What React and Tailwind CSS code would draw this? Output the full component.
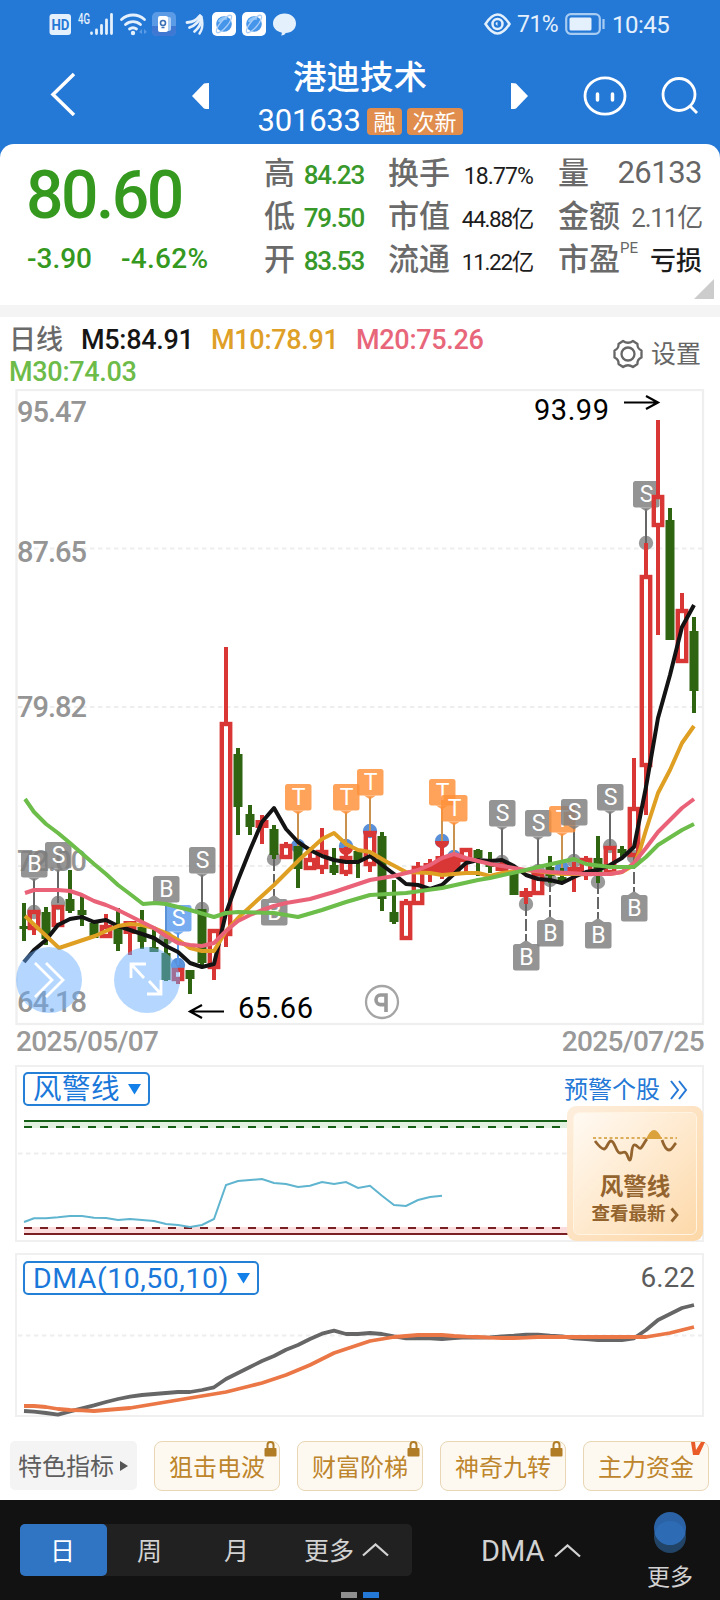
// [type, high, top, bottom, low]  u = hollow red, f = filled red, d = green
const candles = [
  ['d', 903, 926, 929, 941],
  ['u', 910, 910, 930, 935],
  ['d', 907, 912, 939, 945],
  ['u', 905, 905, 927, 927],
  ['d', 870, 899, 911, 913],
  ['d', 896, 910, 915, 926],
  ['d', 921, 923, 938, 938],
  ['u', 914, 925, 938, 938],
  ['d', 908, 926, 944, 951],
  ['f', 921, 921, 934, 955],
  ['d', 910, 927, 942, 949],
  ['d', 927, 947, 952, 952],
  ['d', 939, 953, 980, 981],
  ['u', 968, 968, 981, 984],
  ['d', 970, 970, 979, 994],
  ['d', 909, 909, 963, 967],
  ['u', 929, 929, 969, 980],
  ['u', 647, 722, 936, 947],
  ['d', 748, 754, 807, 835],
  ['d', 805, 814, 827, 835],
  ['f', 815, 820, 828, 844],
  ['d', 825, 829, 855, 859],
  ['u', 842, 844, 859, 859],
  ['d', 846, 846, 869, 888],
  ['u', 850, 858, 870, 870],
  ['u', 828, 850, 869, 874],
  ['d', 848, 865, 873, 875],
  ['u', 847, 856, 874, 876],
  ['d', 849, 851, 861, 878],
  ['u', 831, 831, 866, 872],
  ['d', 832, 836, 899, 911],
  ['d', 880, 912, 922, 924],
  ['u', 899, 901, 940, 940],
  ['u', 862, 866, 905, 905],
  ['f', 859, 863, 873, 882],
  ['f', 841, 856, 873, 879],
  ['f', 855, 855, 873, 873],
  ['u', 848, 848, 862, 873],
  ['d', 849, 850, 858, 876],
  ['d', 852, 860, 867, 873],
  ['f', 860, 863, 871, 871],
  ['d', 872, 872, 895, 895],
  ['f', 888, 891, 897, 904],
  ['u', 872, 872, 895, 895],
  ['d', 856, 867, 876, 883],
  ['d', 868, 877, 881, 883],
  ['f', 862, 867, 875, 892],
  ['u', 856, 858, 876, 880],
  ['d', 836, 858, 872, 883],
  ['u', 846, 846, 874, 874],
  ['d', 846, 849, 853, 857],
  ['u', 758, 807, 857, 857],
  ['u', 543, 575, 767, 815],
  ['u', 420, 495, 527, 635],
  ['d', 508, 520, 640, 640],
  ['u', 593, 609, 663, 663],
  ['d', 617, 631, 691, 713],
];

const ma5 = '24,962 34,950 46,940 58,925 70,919 82,917 94,922 106,920 118,926 130,930 142,934 154,938 166,946 178,952 190,963 202,967 214,964 226,913 238,880 250,850 262,822 274,808 286,829 298,842 310,850 322,856 334,860 346,862 358,862 370,856 382,865 394,874 406,884 418,885 430,889 442,885 454,874 466,863 478,860 490,861 502,860 514,866 526,875 538,879 550,880 562,883 574,877 586,872 598,870 610,865 622,858 634,847 646,787 658,718 670,675 682,627 694,605';
const ma10 = '25,916 59,948 95,936 106,931 118,926 130,924 142,925 154,928 166,933 178,940 190,948 202,951 214,951 226,931 238,918 274,885 300,859 322,839 334,833 346,844 358,850 370,852 387,862 406,872 430,873 442,875 466,873 478,873 490,876 502,873 526,870 562,874 610,874 622,872 634,865 640,850 646,830 658,793 670,770 682,743 694,726';
const ma20 = '25,893 34,890 58,890 70,891 82,895 94,901 106,905 118,910 130,916 142,922 154,928 166,936 178,943 190,945 202,946 214,943 226,931 238,921 250,915 262,910 274,906 286,903 310,899 334,892 370,880 394,876 418,870 430,865 442,858 454,854 466,858 478,861 490,864 502,866 526,870 550,872 586,874 610,874 622,872 634,863 646,848 658,832 682,808 694,799';
const ma30 = '25,799 34,812 46,824 58,833 70,843 94,864 106,874 118,885 130,894 143,904 155,903 166,904 190,910 214,917 226,913 238,912 274,913 298,917 322,910 346,902 370,895 406,893 442,888 478,880 490,878 526,870 538,867 574,859 586,864 610,867 634,867 646,857 658,845 682,830 694,824';

// [letter, x, box top, dot y, color]
const markers = [
  ['B', 34, 851, 912, '#7d7d7d'],
  ['S', 58, 842, 903, '#7d7d7d'],
  ['B', 166, 876, 938, '#7d7d7d'],
  ['S', 178, 905, 965, '#5b9bee'],
  ['S', 202, 847, 909, '#7d7d7d'],
  ['B', 274, 899, 859, '#7d7d7d'],
  ['T', 298, 784, 846, '#ff9038'],
  ['T', 346, 784, 846, '#ff9038'],
  ['T', 370, 769, 831, '#ff9038'],
  ['T', 442, 779, 841, '#ff9038'],
  ['T', 454, 795, 857, '#ff9038'],
  ['S', 502, 800, 862, '#7d7d7d'],
  ['B', 526, 944, 904, '#7d7d7d'],
  ['S', 538, 810, 871, '#7d7d7d'],
  ['B', 550, 920, 880, '#7d7d7d'],
  ['T', 562, 806, 868, '#ff9038'],
  ['S', 574, 799, 861, '#7d7d7d'],
  ['B', 598, 922, 882, '#7d7d7d'],
  ['S', 610, 784, 846, '#7d7d7d'],
  ['B', 634, 895, 857, '#7d7d7d'],
  ['S', 646, 481, 543, '#7d7d7d'],
];

const warn = [1222, 1218.3, 1218.3, 1217.3, 1216, 1216, 1217.7, 1218, 1220, 1219, 1220, 1221, 1224, 1225, 1227, 1225, 1219, 1185, 1181, 1180, 1179, 1183, 1184, 1187, 1185.7, 1182, 1184, 1182, 1188, 1185.7, 1195.7, 1205, 1206, 1200, 1197, 1195.7];
const dif = [171, 171.7, 173, 174.7, 171.3, 168.3, 165.3, 162, 159, 156.7, 155, 154, 153, 152, 152, 150, 147.3, 139, 133, 127, 121, 116, 109.7, 105, 99, 93.7, 90.7, 94, 94, 93, 94, 96.3, 98.3, 98.3, 98.3, 99, 98, 97.3, 97.7, 97.3, 96.3, 95.7, 94.7, 94.7, 95.7, 96.3, 98.3, 99, 100, 100, 100, 98.3, 90, 80, 74, 68, 65];
const ama = [166, 166, 167, 169, 170, 170.3, 171, 170, 169, 168, 166, 164, 162, 160, 158, 156, 154, 152, 149, 146, 143, 139, 135, 130, 125, 119, 113, 109, 105, 101, 99, 97, 96, 95, 95, 95, 96, 96.7, 97, 97.7, 98, 98, 97.7, 97, 97, 97, 97, 97, 97, 97, 97, 97, 97, 95, 93, 90, 87];

const xAt = (i) => (i === 0 ? 24 : 22 + i * 12);
const toPoints = (values) => values.map((v, i) => `${xAt(i)},${v}`).join(' ');

function Candle({ x, data }) {
  const [type, high, top, bottom, low] = data;
  if (type === 'd') {
    return (
      <g fill="#2f6410">
        <rect x={x - 2} y={high} width="4" height={low - high} />
        <rect x={x - 4.5} y={top} width="9" height={bottom - top} />
      </g>
    );
  }
  return (
    <g fill="#d93636">
      {top > high && <rect x={x - 2} y={high} width="4" height={top - high} />}
      {low > bottom && <rect x={x - 2} y={bottom} width="4" height={low - bottom} />}
      {type === 'f' ? (
        <rect x={x - 6.5} y={top} width="13" height={bottom - top} />
      ) : (
        <rect x={x - 4.2} y={top + 2} width="8.4" height={bottom - top - 4} fill="none" stroke="#d93636" strokeWidth="4.4" />
      )}
    </g>
  );
}

function MarkerStem({ data }) {
  const [letter, x, top, dot, color] = data;
  const below = top > dot;
  const dotColor = letter === 'T' || color === '#5b9bee' ? '#5a90d8' : '#999999';
  const stem = letter === 'T' ? '#c9924e' : color === '#5b9bee' ? '#5b9bee' : '#666666';
  return (
    <g>
      <circle cx={x} cy={dot} r="7.2" fill={dotColor} />
      <line
        x1={x}
        x2={x}
        y1={below ? dot : top + 28}
        y2={below ? top - 3 : dot}
        stroke={stem}
        strokeWidth="2"
        strokeDasharray={below ? '12 3' : undefined}
      />
    </g>
  );
}

function MarkerBox({ data }) {
  const [letter, x, top, dot, color] = data;
  const below = top > dot;
  return (
    <g>
      <g fill={color} opacity="0.82">
        <rect x={x - 13} y={top} width="26.5" height="26.5" rx="2.5" />
        <path d={below ? `M${x - 6} ${top}l6-4 6 4z` : `M${x - 6} ${top + 26.5}l6 4 6-4z`} />
      </g>
      <text x={x + 0.5} y={top + 21} textAnchor="middle" fontSize="23" fill="#fff">{letter}</text>
    </g>
  );
}

function StatusBar() {
  return (
    <div className="flex h-12 items-center justify-between pl-[49px] pr-[49px] text-white">
      <svg width="250" height="26" viewBox="49 11 250 26">
        <rect x="49.5" y="14" width="21.5" height="21" rx="3" fill="#e4f0fc" />
        <text x="51.5" y="30" fontSize="15" fontWeight="700" fill="#2478d6" textLength="18" lengthAdjust="spacingAndGlyphs">HD</text>
        <text x="78" y="23.5" fontSize="14" fontWeight="500" fill="#e4f0fc" textLength="12" lengthAdjust="spacingAndGlyphs">4G</text>
        <path d="M91.500 33v.5M96.500 30v3.500M101.500 25.500v8M106.500 20v13.500M111.500 14.500v19" stroke="#e4f0fc" strokeWidth="2.800" strokeLinecap="round" />
        <g fill="none" stroke="#e4f0fc" strokeWidth="2.800" strokeLinecap="round">
          <path d="M121.500 19.500a17 17 0 0 1 23 0M125.500 24.500a11 11 0 0 1 15 0M129.500 29a6 6 0 0 1 7 0" />
        </g>
        <circle cx="133" cy="33" r="2.200" fill="#e4f0fc" />
        <path d="M142 29v5l-3-2zM144 29v5l3-2z" fill="#5a9ce6" />
        <rect x="152" y="12" width="24" height="24" rx="5" fill="#5b9be6" />
        <path d="M152 26h24v5a5 5 0 0 1-5 5h-14a5 5 0 0 1-5-5z" fill="#3f78d2" />
        <rect x="161" y="17" width="10" height="14" rx="2" fill="#a9cdf5" />
        <rect x="158" y="16" width="10" height="16" rx="2" fill="#fff" />
        <circle cx="163" cy="23" r="2.500" fill="none" stroke="#3a6fb5" strokeWidth="1.600" />
        <path d="M161.500 27.500h3" stroke="#3a6fb5" strokeWidth="1.500" />
        <g fill="none" stroke="#e4f0fc" strokeLinecap="round">
          <path d="M187 22.500c6-.5 9-2 13-7" strokeWidth="2.800" />
          <path d="M189.500 27.500c6-2 9-5 11.500-11" strokeWidth="2.800" />
          <path d="M194.500 31.500c5-4 7-8 7-14" strokeWidth="2.800" />
          <path d="M199.500 33.500c3-4 3.500-8 2.500-14" strokeWidth="2.400" />
        </g>
        {[224, 254].map((x) => (
          <g key={x}>
            <rect x={x - 12} y="12" width="24" height="24" rx="5" fill="#fff" />
            <circle cx={x} cy="24" r="7.800" fill="#4596ea" />
            <path d={`M${x - 5} 22a7 7 0 0 1 8-3.500`} stroke="#8cc5f7" strokeWidth="3" fill="none" />
            <ellipse cx={x} cy="24" rx="11" ry="3.500" fill="none" stroke="#a9cdf8" strokeWidth="1.300" transform={`rotate(-50 ${x} 24)`} />
          </g>
        ))}
        <path d="M284.500 13.500c7 0 11.500 4.500 11.500 10s-4.500 9.500-10.500 9.500c0 1.500-2 2.500-4.500 2.500.8-1 1-2 .6-3-5-1-8.600-4.500-8.600-9 0-5.500 5-10 11.500-10z" fill="#e4f0fc" />
      </svg>
      <div className="flex items-center text-[#e4f0fc]">
        <svg width="27" height="22" viewBox="0 0 27 22" fill="none" stroke="#e4f0fc" strokeWidth="2.500">
          <path d="M1.500 11C6 4 9 1.500 13.500 1.500S21 4 25.500 11C21 18 18 20.500 13.500 20.500S6 18 1.500 11z" />
          <circle cx="13.500" cy="11" r="5" />
          <path d="M11.500 11a2 2 0 0 1 2-2v4z" fill="#e4f0fc" stroke="none" />
        </svg>
        <span className="mt-0.5 ml-1.5 w-[48px] text-[23px] tracking-[-0.5px]">71%</span>
        <svg width="41" height="22" viewBox="0 0 41 22">
          <rect x="1.200" y="1.200" width="33.600" height="19.600" rx="4.500" fill="none" stroke="#a8cbf2" strokeWidth="2.200" />
          <rect x="4.500" y="4.500" width="22" height="13" rx="1.500" fill="#e4f0fc" />
          <path d="M38.500 6v10" stroke="#a8cbf2" strokeWidth="2.200" />
        </svg>
        <span className="mt-0.5 ml-[6px] w-[59px] text-[24px] tracking-[-0.5px] whitespace-nowrap">10:45</span>
      </div>
    </div>
  );
}

function NavBar() {
  return (
    <div className="flex h-[112px] items-start pl-[50px] text-white">
      <svg className="mt-6" width="28" height="44" viewBox="0 0 28 44" fill="none" stroke="#fff" strokeWidth="3.500">
        <path d="M24 2L3 22.500 24 43" />
      </svg>
      <svg className="ml-[114px] mt-[34px]" width="17" height="28" viewBox="0 0 17 28" fill="#fff">
        <path d="M0 14L12 1.500Q13 1 17 1v26q-4 0-5-.5z" />
      </svg>
      <div className="ml-[44px] flex w-[214px] flex-col items-center pt-2">
        <div className="text-[33.500px] leading-[44px] font-medium">港迪技术</div>
        <div className="mt-[3px] flex items-center gap-[5px] text-[22px]">
          <span className="mr-0.5 w-[103px] text-[31px] leading-9 tracking-[-0.2px]">301633</span>
          <span className="flex h-[27px] items-center rounded-sm bg-[#e08d4e] px-[6px] pt-0.5">融</span>
          <span className="flex h-[27px] items-center rounded-sm bg-[#e08d4e] px-[6px] pt-0.5">次新</span>
        </div>
      </div>
      <svg className="ml-[44px] mt-[34px]" width="17" height="28" viewBox="0 0 17 28" fill="#fff">
        <path d="M17 14L5 1.500Q4 1 0 1v26q4 0 5-.5z" />
      </svg>
      <svg className="ml-[55px] mt-7" width="44" height="40" viewBox="0 0 44 40" fill="none" stroke="#fff">
        <ellipse cx="22" cy="20" rx="20" ry="18.200" strokeWidth="2.800" />
        <path d="M14.500 18v6M29.500 18v6" strokeWidth="3.500" strokeLinecap="round" />
      </svg>
      <svg className="ml-[34px] mt-[28px]" width="38" height="40" viewBox="0 0 38 40" fill="none" stroke="#fff" strokeWidth="2.800">
        <circle cx="18" cy="18.500" r="16" />
        <path d="M28.500 29.500l7.500 7.500" />
      </svg>
    </div>
  );
}

function Stat({ label, sup, value, valueClass }) {
  return (
    <div className="flex h-[43px] items-center justify-between whitespace-nowrap">
      <span className="text-[31px] font-medium text-[#6a6a6a]">
        {label}
      </span>
      {sup && <span className="-mt-6 flex-1 text-[15px] text-[#666]">{sup}</span>}
      <span className={valueClass}>{value}</span>
    </div>
  );
}

function Quote() {
  const green = 'text-[26px] tracking-[-1.2px] font-medium text-[#38982a] pt-0.5';
  const black = 'text-[23px] tracking-[-0.9px] text-[#1c1c1c] pt-[5px]';
  const blackCjk = 'text-[22.5px] tracking-[-1.3px] text-[#1c1c1c] pt-[5px]';
  return (
    <div className="relative -mt-4 flex h-[161px] rounded-t-[14px] bg-white pt-[9px] pl-[27px] pr-[18px]">
      <div className="w-[237px] font-medium text-[#35991f]">
        <div className="-ml-px mt-[7px] text-[66px] leading-[72px] tracking-[-2.500px]">80.60</div>
        <div className="mt-2.5 flex text-[28px] leading-[34px]">
          <span className="w-[94px]">-3.90</span>
          <span className="tracking-[0.3px]">-4.62%</span>
        </div>
      </div>
      <div className="w-[100px]">
        <Stat label="高" value="84.23" valueClass={green} />
        <Stat label="低" value="79.50" valueClass={green} />
        <Stat label="开" value="83.53" valueClass={green} />
      </div>
      <div className="ml-[24px] w-[145px]">
        <Stat label="换手" value="18.77%" valueClass={black} />
        <Stat label="市值" value="44.88亿" valueClass={blackCjk} />
        <Stat label="流通" value="11.22亿" valueClass={blackCjk} />
      </div>
      <div className="ml-[25px] flex-1">
        <Stat label="量" value="26133" valueClass="text-[31px] tracking-[-0.500px] text-[#666] -mt-0.5" />
        <Stat label="金额" value="2.11亿" valueClass="text-[26px] tracking-[-1.2px] text-[#666] pt-0.5" />
        <Stat label="市盈" sup="PE" value="亏损" valueClass="text-[26px] font-medium text-[#1c1c1c] pt-0.5" />
      </div>
      <svg className="absolute right-[6px] bottom-[6px]" width="20" height="20" viewBox="0 0 20 20">
        <path d="M20 0v20H0z" fill="#ccc" />
      </svg>
    </div>
  );
}

function Legend() {
  return (
    <div className="flex h-[72px] justify-between pl-[9px] pr-[19px]">
      <div className="pt-[7px] text-[27px] leading-8 font-medium tracking-[-0.3px] whitespace-nowrap">
        <div className="flex">
          <span className="w-[72px] text-[#6a6a6a] tracking-normal">日线</span>
          <span className="w-[130px] text-[#151515]">M5:84.91</span>
          <span className="w-[145px] text-[#dfa028]">M10:78.91</span>
          <span className="text-[#e8667a]">M20:75.26</span>
        </div>
        <div className="text-[#6dbb49]">M30:74.03</div>
      </div>
      <div className="mt-[18px] flex h-[38px] items-center gap-2 text-[25px] text-[#666]">
        <svg width="30" height="30" viewBox="0 0 30 30" fill="none" stroke="#666" strokeWidth="2.300">
          <path d="M10 2q5 3.500 10 0l4.500 3q-.5 4.500 4 6.500v7q-4.500 2-4 6.500l-4.500 3q-5-3.500-10 0l-4.500-3q.5-4.500-4-6.500v-7q4.500-2 4-6.500z" strokeLinejoin="round" />
          <circle cx="15" cy="15" r="6.500" />
        </svg>
        <span className="pt-0.5">设置</span>
      </div>
    </div>
  );
}

function AxisText({ x, y, w, children, fill = '#959595' }) {
  return (
    <text x={x} y={y} fontSize="29" fill={fill} textLength={w} fontWeight={fill === '#000' ? 400 : 500}>
      {children}
    </text>
  );
}

function KLine() {
  return (
    <svg className="block" width="720" height="637" viewBox="0 389 720 637">
      <rect x="16.500" y="390" width="686.500" height="634" fill="none" stroke="#efefef" strokeWidth="2.300" />
      <path d="M18 548.500h685M18 707h685M18 866h685" stroke="#eeeeee" strokeWidth="2" strokeDasharray="4.500 3.500" />
      <AxisText x={17} y={421.500} w={70}>95.47</AxisText>
      <AxisText x={17} y={562} w={70}>87.65</AxisText>
      <AxisText x={17} y={717} w={70}>79.82</AxisText>
      <AxisText x={17} y={871} w={70}>72.00</AxisText>
      <AxisText x={17} y={1012} w={70}>64.18</AxisText>

      {markers.map((m, i) => <MarkerStem key={i} data={m} />)}
      {markers.map((m, i) => <MarkerBox key={i} data={m} />)}
      {candles.map((c, i) => <Candle key={i} x={xAt(i)} data={c} />)}
      <path d="M363 831h14l-2 6h-10zM435 841h14a7 7 0 0 1-14 0zM339 848h14a7 7 0 0 1-14 0z" fill="#d93636" />

      <g fill="none" strokeWidth="4" strokeLinejoin="round">
        <polyline points={ma5} stroke="#131313" />
        <polyline points={ma10} stroke="#df9f22" />
        <polyline points={ma20} stroke="#ea6278" />
        <polyline points={ma30} stroke="#6cbd49" />
      </g>

      <g fill="none" stroke="#000" strokeWidth="2.200">
        <path d="M624 402.500h33M646 396l12 6.500-12 6.500" />
        <path d="M224 1011.500h-33M202 1005l-12 6.500 12 6.500" />
      </g>
      <AxisText x={534} y={420} w={75} fill="#000">93.99</AxisText>
      <AxisText x={238} y={1018} w={75} fill="#000">65.66</AxisText>

      <circle cx="382" cy="1002" r="16" fill="#fff" stroke="#a5a5a5" strokeWidth="2.300" />
      <path d="M386 1012v-17h-5.500a4.500 4.800 0 0 0 0 9.600h5" fill="none" stroke="#999" strokeWidth="3.600" />

      <g fill="#66adff" opacity="0.48">
        <circle cx="49" cy="980" r="33" />
        <circle cx="147" cy="980" r="33" />
      </g>
      <g fill="none" stroke="#fff" strokeWidth="2.800">
        <path d="M35 963l17 17-17 17M46 963l17 17-17 17" />
        <path d="M144 978l-13-14M131 978v-14h15M149 981l12 13M147 994h14v-14" />
      </g>
    </svg>
  );
}

function PickerButton({ children }) {
  return (
    <div className="flex h-[34px] items-center gap-2 self-start rounded-[5px] border-2 border-[#2480d6] pr-[7px] pl-2 text-[28.500px] leading-none whitespace-nowrap text-[#1a78da]">
      <span className="pt-[3px] tracking-[0.500px]">{children}</span>
      <svg width="13" height="11" viewBox="0 0 13 11"><path d="M0 0h13L6.500 10.500z" fill="#1280e8" /></svg>
    </div>
  );
}

function WarnPanel() {
  return (
    <div className="relative mr-4 ml-[15px] h-[177px] border-2 border-[#f0f0f0]">
      <svg className="absolute -left-[17px] -top-0.5" width="720" height="177" viewBox="0 1065 720 177">
        <rect x="24" y="1121" width="544" height="7" fill="#e2f0df" />
        <rect x="24" y="1227" width="544" height="7" fill="#fadcdc" />
        <path d="M18 1153.500h550" stroke="#eeeeee" strokeWidth="2" strokeDasharray="4.500 3.500" />
        <path d="M24 1121h544" stroke="#146014" strokeWidth="2" />
        <path d="M24 1127h544" stroke="#146014" strokeWidth="2" strokeDasharray="8 8" />
        <path d="M24 1228h544" stroke="#7a1f24" strokeWidth="2" strokeDasharray="8 8" />
        <path d="M24 1234h544" stroke="#7a1f24" strokeWidth="2" />
        <polyline points={toPoints(warn)} fill="none" stroke="#5fb4cf" strokeWidth="2" />
      </svg>
      <div className="relative flex items-start justify-between pt-[5px] pr-[14px] pl-1.5">
        <PickerButton>风警线</PickerButton>
        <div className="flex items-center gap-2.5 pt-0.5 text-[24px] leading-[32px] text-[#2478d6]">
          预警个股
          <svg width="18" height="20" viewBox="0 0 18 20" fill="none" stroke="#2478d6" strokeWidth="2">
            <path d="M1 1l7 9-7 9M9 1l7 9-7 9" />
          </svg>
        </div>
      </div>
      <div className="absolute -right-px top-[39px] h-[135px] w-[136px] rounded-[9px] bg-linear-to-br from-[#fdeedd] to-[#fdd7a6] p-1.5">
        <div className="flex h-full flex-col items-center rounded-md border-[1.500px] border-[#fff3e2] bg-linear-to-br from-[#fffaf3] to-[#fdd9aa] pt-4 font-bold text-[#94642f]">
          <svg width="86" height="34" viewBox="0 0 86 34" fill="none">
            <path d="M1 9h84" stroke="#dcae5c" strokeWidth="2.200" strokeDasharray="3 2.500" />
            <path d="M54 10q4-9 8-9t8 9z" fill="#dba23c" />
            <path d="M3 12c3 4 6 8 9 8s4-8 7-8c4 0 5 12 9 12 3 0 4-2 6 0s2 7 4 7 1-14 4-15 5 5 7 3 4-7 6-9M70 11c2 6 4 10 7 10s4-4 7-7" stroke="#94642f" strokeWidth="2.800" />
          </svg>
          <div className="mt-[9px] text-[23.500px] leading-[30px]">风警线</div>
          <div className="-mt-px flex items-center gap-1 text-[18.500px] leading-[27px] whitespace-nowrap">
            查看最新
            <svg width="9" height="16" viewBox="0 0 9 16" fill="none" stroke="#94642f" strokeWidth="2.800"><path d="M1.500 1.500L7 8l-5.500 6.500" /></svg>
          </div>
        </div>
      </div>
    </div>
  );
}

function DmaPanel() {
  return (
    <div className="relative mr-4 ml-[15px] mt-[11px] h-[164px] border-2 border-[#f0f0f0]">
      <svg className="absolute -left-[17px] -top-0.5" width="720" height="164" viewBox="0 13 720 164">
        <path d="M18 95.500h685" stroke="#eeeeee" strokeWidth="2" strokeDasharray="4.500 3.500" />
        <g fill="none" strokeWidth="3.800" strokeLinejoin="round">
          <polyline points={toPoints(dif)} stroke="#666" />
          <polyline points={toPoints(ama)} stroke="#ea7745" />
        </g>
      </svg>
      <div className="relative flex items-start justify-between pt-1.5 pr-[7px] pl-1.5">
        <PickerButton>DMA(10,50,10)</PickerButton>
        <span className="text-[28px] leading-[34px] text-[#5c5c5c]">6.22</span>
      </div>
    </div>
  );
}

function Chips() {
  return (
    <div className="flex h-[83px] gap-[17px] pt-[24px] pl-[10px]">
      <div className="flex h-[49px] w-[127px] items-center gap-1.5 rounded-[5px] bg-[#f4f4f4] pl-2 text-[24px] whitespace-nowrap text-[#5e5e5e]">
        <span className="pt-[3px]">特色指标</span>
        <svg width="8" height="10" viewBox="0 0 8 10"><path d="M0 0v10l8-5z" fill="#555" /></svg>
      </div>
      {['狙击电波', '财富阶梯', '神奇九转', '主力资金'].map((name) => (
        <div key={name} className="relative flex h-[50px] w-[126px] items-center justify-center rounded-lg border-[1.500px] border-[#e8d6b4] bg-[#fdf9f1] pt-[3px] text-[24px] whitespace-nowrap text-[#bd852c]">
          {name}
          {name === '主力资金' ? (
            <svg className="absolute top-0 right-[3px]" width="15" height="13" viewBox="0 0 15 13"><path d="M1 0h4l1 8 5-8h4L9 13H3z" fill="#e95c28" /></svg>
          ) : (
            <svg className="absolute -top-px right-[2px]" width="13" height="16" viewBox="0 0 13 16">
              <path d="M3.500 7V4a3 3 0 0 1 6 0v3" fill="none" stroke="#b17c26" strokeWidth="2" />
              <rect x="0.500" y="7" width="12" height="8.500" rx="1" fill="#b17c26" />
            </svg>
          )}
        </div>
      ))}
    </div>
  );
}

function Caret() {
  return (
    <svg width="27" height="14" viewBox="0 0 27 14" fill="none" stroke="#d2d2d2" strokeWidth="2.300">
      <path d="M1 12.500L13.500 1.500 26 12.500" />
    </svg>
  );
}

function BottomBar() {
  return (
    <div className="relative flex h-[100px] items-start bg-[#121212] pl-5 text-[25px] text-[#d2d2d2]">
      <div className="mt-6 flex h-[52px] w-[392px] items-center rounded-[5px] bg-[#212121]">
        <div className="flex h-full w-[87px] items-center justify-center rounded-[5px] bg-[#3074c4] pt-[3px] pr-0.5 text-white">日</div>
        <div className="w-[87px] pt-[3px] pr-0.5 text-center">周</div>
        <div className="w-[87px] pt-[3px] pr-0.5 text-center">月</div>
        <div className="flex flex-1 items-center justify-center gap-2"><span className="pt-[3px]">更多</span> <Caret /></div>
      </div>
      <div className="mt-[25px] ml-[69px] flex h-[52px] items-center gap-2 text-[29px]">
        <span className="w-[65px] pt-0.5">DMA</span>
        <Caret />
      </div>
      <div className="ml-[66px] flex flex-col items-center pt-3 text-[23px] leading-[30px]">
        <svg width="34" height="42" viewBox="0 0 34 42">
          <circle cx="17" cy="25" r="16" fill="#224467" />
          <circle cx="17" cy="16" r="16" fill="#2a62a5" />
          <path d="M1.500 21a16 16 0 0 1 31 0 16 16 0 0 1-31 0z" fill="#2d6bb4" />
        </svg>
        <div className="mt-[9px]">更多</div>
      </div>
      <div className="absolute bottom-[2px] left-[341px] flex gap-1.5">
        <div className="h-1.5 w-4 bg-[#8f8f8f]" />
        <div className="h-1.5 w-4 bg-[#2478d6]" />
      </div>
    </div>
  );
}

export default function App() {
  return (
    <div className="h-[1600px] w-[720px] overflow-hidden bg-white font-[Roboto,'Noto_Sans_CJK_SC',sans-serif]">
      <div className="bg-[#2478d6]">
        <StatusBar />
        <NavBar />
      </div>
      <Quote />
      <div className="h-3 bg-[#f4f4f4]" />
      <Legend />
      <KLine />
      <div className="flex h-[39px] justify-between pr-4 pl-4 text-[28px] leading-[32px] font-medium tracking-[-0.7px] text-[#999]">
        <span>2025/05/07</span>
        <span>2025/07/25</span>
      </div>
      <WarnPanel />
      <DmaPanel />
      <Chips />
      <BottomBar />
    </div>
  );
}
